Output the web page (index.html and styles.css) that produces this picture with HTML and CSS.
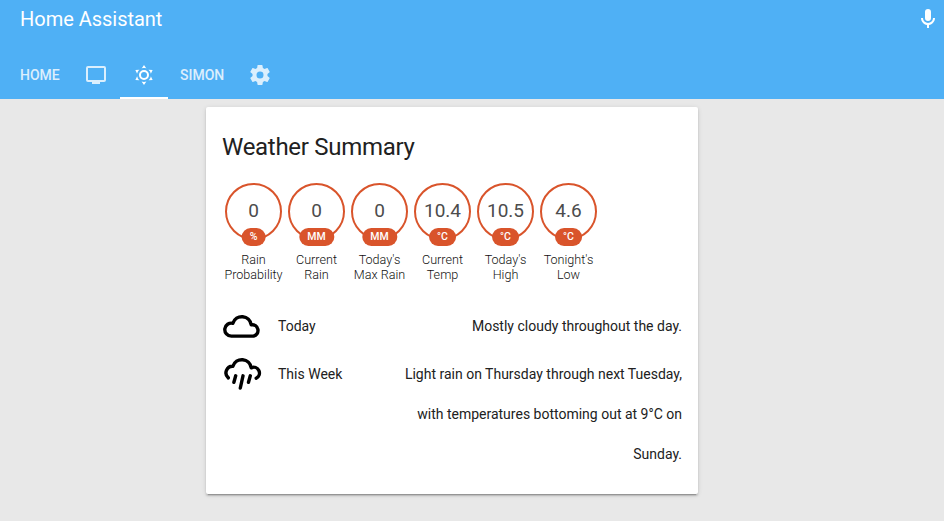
FILE: index.html
```html
<!DOCTYPE html>
<html lang="en">
<head>
<meta charset="utf-8">
<title>Home Assistant</title>
<link rel="stylesheet" href="styles.css">
</head>
<body>
<header class="header">
  <div class="toolbar">
    <h1 class="title">Home Assistant</h1>
    <svg class="icon" viewBox="0 0 24 24"><path d="M12 2a3 3 0 0 1 3 3v6a3 3 0 0 1-6 0V5a3 3 0 0 1 3-3m7 9c0 3.53-2.61 6.44-6 6.93V21h-2v-3.07c-3.39-.49-6-3.4-6-6.93h2a5 5 0 0 0 10 0h2z"/></svg>
  </div>
  <nav class="tabs">
    <a class="tab"><span>HOME</span></a>
    <a class="tab"><svg class="icon" viewBox="0 0 24 24"><path d="M20 17H4V5h16m0-2H4a2 2 0 0 0-2 2v12a2 2 0 0 0 2 2h4v2h8v-2h4a2 2 0 0 0 2-2V5a2 2 0 0 0-2-2z"/></svg></a>
    <a class="tab active"><svg class="icon" viewBox="0 0 24 24"><path d="M12 7a5 5 0 1 1 0 10 5 5 0 0 1 0-10m0 2a3 3 0 1 0 0 6 3 3 0 0 0 0-6m0-7 2.39 3.42C13.65 5.15 12.84 5 12 5s-1.65.15-2.39.42L12 2M3.34 7l4.16-.35A7.2 7.2 0 0 0 5.94 8.5c-.44.74-.69 1.5-.83 2.29L3.34 7m.02 10 1.76-3.77a7.131 7.131 0 0 0 2.38 4.14L3.36 17M20.65 7l-1.77 3.79a7.023 7.023 0 0 0-2.38-4.15l4.15.36m-.01 10-4.14.36c.59-.51 1.12-1.14 1.54-1.86.42-.73.69-1.5.83-2.29L20.64 17M12 22l-2.41-3.44c.74.27 1.55.44 2.41.44.82 0 1.63-.17 2.37-.44L12 22z"/></svg></a>
    <a class="tab"><span>SIMON</span></a>
    <a class="tab"><svg class="icon" viewBox="0 0 24 24"><path d="M12 15.5A3.5 3.5 0 0 1 8.5 12 3.5 3.5 0 0 1 12 8.500a3.500 3.500 0 0 1 3.500 3.500 3.500 3.500 0 0 1-3.500 3.500m7.430-2.530c.040-.320.070-.640.070-.970s-.030-.660-.070-1l2.110-1.630c.190-.150.240-.420.120-.640l-2-3.460c-.120-.220-.390-.310-.610-.220l-2.490 1c-.520-.390-1.060-.730-1.690-.980l-.370-2.650A.506.506 0 0 0 14 2h-4c-.250 0-.460.180-.500.420l-.370 2.650c-.630.250-1.170.590-1.690.980l-2.490-1c-.220-.090-.490 0-.610.220l-2 3.460c-.130.220-.070.490.120.640L4.570 11c-.040.340-.070.670-.070 1s.030.650.070.970l-2.110 1.660c-.190.150-.250.420-.120.640l2 3.460c.120.220.390.300.610.220l2.490-1.010c.520.400 1.060.740 1.690.990l.370 2.650c.040.240.250.420.500.420h4c.250 0 .460-.180.500-.420l.370-2.650c.630-.260 1.170-.590 1.690-.990l2.490 1.010c.220.080.490 0 .610-.220l2-3.460c.120-.220.070-.490-.120-.640l-2.110-1.660z"/></svg></a>
  </nav>
</header>
<main class="card">
  <h2 class="card-title">Weather Summary</h2>
  <section class="badges">
    <div class="badge"><div class="circle">0<span class="unit">%</span></div><div class="label">Rain<br>Probability</div></div>
    <div class="badge"><div class="circle">0<span class="unit">MM</span></div><div class="label">Current<br>Rain</div></div>
    <div class="badge"><div class="circle">0<span class="unit">MM</span></div><div class="label">Today's<br>Max Rain</div></div>
    <div class="badge"><div class="circle">10.4<span class="unit">°C</span></div><div class="label">Current<br>Temp</div></div>
    <div class="badge"><div class="circle">10.5<span class="unit">°C</span></div><div class="label">Today's<br>High</div></div>
    <div class="badge"><div class="circle">4.6<span class="unit">°C</span></div><div class="label">Tonight's<br>Low</div></div>
  </section>
  <section class="rows">
    <div class="row">
      <svg class="weather" viewBox="0 0 40 40"><path d="M9.300 30.100A6.500 6.500 0 1 1 10.900 17.300A9.400 9.400 0 0 1 29.200 18.900A5.700 5.700 0 1 1 31.400 30.100Z"/></svg>
      <span class="name">Today</span>
      <span class="state">Mostly cloudy throughout the day.</span>
    </div>
    <div class="row">
      <svg class="weather" viewBox="0 0 40 40"><path d="M6.300 23.900A6.600 6.600 0 0 1 10.900 12.300A9.400 9.400 0 0 1 29.200 13.900A5.700 5.700 0 0 1 34.200 24.200M13.700 21.800L11.900 28.300M21 21.800L18.300 34M28.300 21.800L26.500 28.300"/></svg>
      <span class="name">This Week</span>
      <span class="state">Light rain on Thursday through next Tuesday, with temperatures bottoming out at 9°C on Sunday.</span>
    </div>
  </section>
</main>
</body>
</html>
```
FILE: styles.css
```css
* { box-sizing: border-box; }
body {
  margin: 0;
  min-height: 521px;
  background: #e8e8e8;
  color: #212121;
  font-family: Roboto, "Liberation Sans", sans-serif;
}
.header {
  height: 99px;
  background: #4fb0f5;
  color: #fff;
}
.toolbar {
  display: flex;
  align-items: center;
  justify-content: space-between;
  height: 51px;
  padding: 0 4px 13px 20px;
}
.title {
  margin: 0;
  font-size: 20px;
  font-weight: 400;
  letter-spacing: -.02px;
}
.icon {
  display: block;
  width: 24px;
  height: 24px;
  fill: currentColor;
}
.tabs {
  display: flex;
  height: 48px;
  padding-left: 8px;
}
.tab {
  display: flex;
  align-items: center;
  padding: 0 12px;
  border-bottom: 2px solid transparent;
  border-top: 2px solid transparent;
  font-size: 14px;
  font-weight: 500;
}
.tab > * { opacity: .8; }
.tab:nth-child(1) { width: 64px; }
.tab.active { border-bottom-color: #fff; }
.tab.active > * { opacity: 1; }
.card {
  width: 492px;
  height: 387px;
  margin: 8px 0 0 206px;
  padding: 24px 16px 0;
  background: #fff;
  border-radius: 2px;
  box-shadow: 0 2px 2px rgba(0,0,0,.14), 0 1px 5px rgba(0,0,0,.12), 0 3px 1px -2px rgba(0,0,0,.2);
}
.card-title {
  margin: 0 0 20px;
  font-size: 24px;
  font-weight: 400;
  letter-spacing: -.288px;
  line-height: 32px;
}
.badges { display: flex; height: 123px; }
.badge { width: 63px; text-align: center; }
.circle {
  position: relative;
  width: 57px;
  height: 57px;
  margin: 0 auto 12px;
  border: 2px solid #d9542b;
  border-radius: 50%;
  color: #4c4c4c;
  font-size: 19px;
  line-height: 52px;
}
.unit {
  position: absolute;
  left: 50%;
  bottom: -8px;
  transform: translateX(-50%);
  height: 18px;
  padding: 0 8.5px;
  border-radius: 9px;
  background: #d9542b;
  color: #fff;
  font-size: 10.5px;
  font-weight: 500;
  line-height: 17px;
}
.label {
  white-space: nowrap;
  font-size: 12.6px;
  font-weight: 300;
  line-height: 15px;
  color: #111;
}
.row {
  display: flex;
  align-items: flex-start;
  margin-bottom: 8px;
  font-size: 14px;
  line-height: 40px;
}
.weather {
  flex: none;
  width: 40px;
  height: 40px;
  margin-right: 16px;
  fill: none;
  stroke: #000;
  stroke-width: 3.4;
  stroke-linecap: round;
  stroke-linejoin: round;
}
.name { flex: none; }
.state {
  width: 300px;
  margin-left: auto;
  text-align: right;
}
```
